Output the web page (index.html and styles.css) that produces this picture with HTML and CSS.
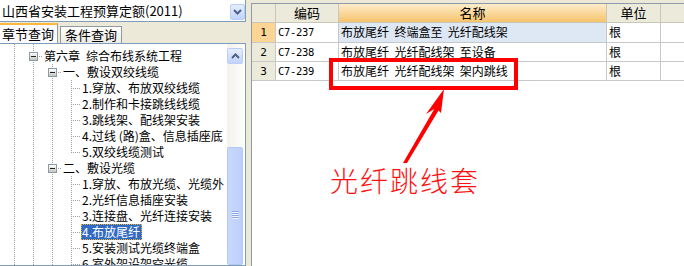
FILE: index.html
```html
<!DOCTYPE html>
<html>

<head>
    <meta charset="UTF-8">
    <title>定额查询</title>
    <link rel="stylesheet" href="styles.css">
</head>

<body>
    <div class="app">
        <!-- left: quota library + chapter tree -->
        <div class="left">
            <div class="combo">
                <span class="combo-text">山西省安装工程预算定额(2011)</span>
                <span class="combo-btn">
                    <svg width="9" height="6" viewBox="0 0 9 6"><path d="M1 1 L4.5 4.5 L8 1" fill="none" stroke="#4d6185" stroke-width="2"/></svg>
                </span>
            </div>
            <div class="tabs">
                <div class="tab active">章节查询</div>
                <div class="tab">条件查询</div>
            </div>
            <div class="tree-box">
                <div class="tree">
                    <div class="row filler"><span class="g v"></span><span class="g v"></span></div>
                    <div class="row"><span class="g v"></span><span class="g t"><span class="box"></span></span><span class="lbl">第六章&#8194;综合布线系统工程</span></div>
                    <div class="row"><span class="g v"></span><span class="g v"></span><span class="g t"><span class="box"></span></span><span class="lbl">一、敷设双绞线缆</span></div>
                    <div class="row"><span class="g v"></span><span class="g v"></span><span class="g v"></span><span class="g t"></span><span class="lbl">1.穿放、布放双绞线缆</span></div>
                    <div class="row"><span class="g v"></span><span class="g v"></span><span class="g v"></span><span class="g t"></span><span class="lbl">2.制作和卡接跳线线缆</span></div>
                    <div class="row"><span class="g v"></span><span class="g v"></span><span class="g v"></span><span class="g t"></span><span class="lbl">3.跳线架、配线架安装</span></div>
                    <div class="row"><span class="g v"></span><span class="g v"></span><span class="g v"></span><span class="g t"></span><span class="lbl">4.过线 (路)盒、信息插座底</span></div>
                    <div class="row"><span class="g v"></span><span class="g v"></span><span class="g v"></span><span class="g e"></span><span class="lbl">5.双绞线缆测试</span></div>
                    <div class="row"><span class="g v"></span><span class="g v"></span><span class="g t"><span class="box"></span></span><span class="lbl">二、敷设光缆</span></div>
                    <div class="row"><span class="g v"></span><span class="g v"></span><span class="g v"></span><span class="g t"></span><span class="lbl">1.穿放、布放光缆、光缆外</span></div>
                    <div class="row"><span class="g v"></span><span class="g v"></span><span class="g v"></span><span class="g t"></span><span class="lbl">2.光纤信息插座安装</span></div>
                    <div class="row"><span class="g v"></span><span class="g v"></span><span class="g v"></span><span class="g t"></span><span class="lbl">3.连接盘、光纤连接安装</span></div>
                    <div class="row"><span class="g v"></span><span class="g v"></span><span class="g v"></span><span class="g t"></span><span class="lbl selected">4.布放尾纤</span></div>
                    <div class="row"><span class="g v"></span><span class="g v"></span><span class="g v"></span><span class="g t"></span><span class="lbl">5.安装测试光缆终端盒</span></div>
                    <div class="row"><span class="g v"></span><span class="g v"></span><span class="g v"></span><span class="g t"></span><span class="lbl">6.室外架设架空光缆</span></div>
                </div>
                <div class="vscroll">
                    <div class="sb-btn">
                        <svg width="9" height="6" viewBox="0 0 9 6"><path d="M1 5 L4.5 1.5 L8 5" fill="none" stroke="#4d6185" stroke-width="2"/></svg>
                    </div>
                    <div class="sb-track"></div>
                    <div class="sb-thumb"><span class="grip"></span></div>
                </div>
            </div>
        </div>

        <!-- right: quota items grid -->
        <div class="right">
            <div class="grid-wrap">
                <div class="grid">
                    <div class="hd"></div>
                    <div class="hd">编码</div>
                    <div class="hd sorted">名称</div>
                    <div class="hd">单位</div>
                    <div class="hd last"></div>

                    <div class="num current">1</div>
                    <div class="cell code">C7-237</div>
                    <div class="cell focus">布放尾纤  终端盒至  光纤配线架</div>
                    <div class="cell">根</div>
                    <div class="cell last"></div>

                    <div class="num">2</div>
                    <div class="cell code">C7-238</div>
                    <div class="cell">布放尾纤  光纤配线架  至设备</div>
                    <div class="cell">根</div>
                    <div class="cell last"></div>

                    <div class="num">3</div>
                    <div class="cell code">C7-239</div>
                    <div class="cell">布放尾纤  光纤配线架  架内跳线</div>
                    <div class="cell">根</div>
                    <div class="cell last"></div>
                </div>
            </div>

            <!-- red annotation drawn over the grid -->
            <div class="mark-box"></div>
            <svg class="mark-arrow" width="70" height="85" viewBox="140 85 70 85">
                <polygon points="152,163 156,163 189,108 185,106" fill="#ff0000"/>
                <polygon points="193,89 175,114 185,108 190,113" fill="#ff0000"/>
            </svg>
            <div class="mark-text">光纤跳线套</div>
        </div>
    </div>
</body>

</html>
```

FILE: styles.css
```css
body {
    margin: 0;
    width: 684px;
    height: 266px;
    overflow: hidden;
    background-color: #ece9d8;
    font-family: "Noto Sans CJK SC", "Noto Sans", sans-serif;
    font-size: 12px;
    color: #000000;
}

.app {
    display: flex;
    height: 266px;
}

/* ---- left side ---- */
.left {
    width: 248px;
    display: flex;
    flex-direction: column;
}

.combo {
    width: 246px;
    height: 22px;
    box-sizing: border-box;
    border-right: 1px solid #7f9db9;
    border-bottom: 1px solid #7f9db9;
    background-color: #FFFFFF;
    display: flex;
    padding-left: 2px;
}

.combo-text {
    flex: 1;
    font-size: 13px;
    line-height: 21px;
    white-space: nowrap;
}

.combo-btn,
.sb-btn {
    width: 15px;
    height: 16px;
    box-sizing: border-box;
    border: 1px solid #bccdf9;
    border-radius: 2px;
    background: linear-gradient(#e6eefc, #c1d3fb);
    display: flex;
    align-items: center;
    justify-content: center;
}

.combo-btn {
    margin-top: 4px;
}

.tabs {
    height: 21px;
    display: flex;
    align-items: flex-end;
}

.tab {
    height: 17px;
    box-sizing: border-box;
    padding: 0 4px;
    border: 1px solid #919b9c;
    border-bottom: none;
    background: linear-gradient(#fefefe, #ecebe6);
    font-size: 13px;
    line-height: 15px;
    margin-left: 2px;
}

.tab.active {
    height: 20px;
    margin-left: 0;
    padding: 0 3px 0 2px;
    border-left: none;
    border-top: 2px solid #ffb73c;
    background: #fcfcfe;
    line-height: 18px;
}

.tree-box {
    flex: 1;
    width: 246px;
    box-sizing: border-box;
    border: 1px solid #7f9db9;
    border-left: none;
    background-color: #FFFFFF;
    display: flex;
    overflow: hidden;
}

.tree {
    flex: 1;
    min-width: 0;
    overflow: hidden;
    padding-left: 5px;
}

.row {
    display: flex;
    height: 16px;
}

.row.filler {
    height: 4px;
}

.g {
    width: 19px;
    height: 100%;
    flex: none;
    --dotv: repeating-linear-gradient(to bottom, #a0a0a0 0 1px, transparent 1px 2px);
    --doth: repeating-linear-gradient(to right, #a0a0a0 0 1px, transparent 1px 2px);
}

.g.v {
    background: var(--dotv) 9px 0 / 1px 100% no-repeat;
}

.g.t {
    background: var(--dotv) 9px 0 / 1px 100% no-repeat, var(--doth) 11px 8px / 8px 1px no-repeat;
}

.g.e {
    background: var(--dotv) 9px 0 / 1px 9px no-repeat, var(--doth) 11px 8px / 8px 1px no-repeat;
}

.box {
    display: block;
    width: 9px;
    height: 9px;
    box-sizing: border-box;
    margin: 4px 0 0 5px;
    border: 1px solid #8a9aa8;
    background: linear-gradient(#222, #222) center / 5px 1px no-repeat, linear-gradient(#ffffff, #c8c6bb);
}

.lbl {
    padding: 0 2px 0 1px;
    line-height: 16px;
    white-space: nowrap;
}

.lbl.selected {
    background-color: #316ac5;
    color: #FFFFFF;
    outline: 1px dotted #e0b040;
    outline-offset: -1px;
}

.vscroll {
    width: 16px;
    margin-right: 2px;
    padding-top: 4px;
    display: flex;
    flex-direction: column;
    background: linear-gradient(to right, #f3f2ec, #fdfdfa);
}

.sb-btn {
    width: 16px;
    height: 16px;
}

.sb-track {
    height: 83px;
}

.sb-thumb {
    flex: 1;
    border: 1px solid #b4c8f6;
    border-radius: 2px;
    background: linear-gradient(to right, #c9d8fc, #bcd0fb);
    display: flex;
    justify-content: center;
}

.grip {
    margin-top: 63px;
    width: 7px;
    height: 8px;
    background: repeating-linear-gradient(to bottom, #8faae8 0 1px, #eef3fe 1px 2px);
}

/* ---- right side ---- */
.right {
    flex: 1;
    margin-left: 3px;
    padding-top: 3px;
    position: relative;
    display: flex;
    flex-direction: column;
}

.grid-wrap {
    flex: 1;
    background-color: #FFFFFF;
    border-left: 1px solid #8d9aa8;
    border-top: 1px solid #8d9aa8;
}

.grid {
    display: grid;
    grid-template-columns: 24px 63px 268px 54px 1fr;
    grid-template-rows: 19px 20px 19px 19px;
}

.hd,
.num,
.cell {
    border-right: 1px solid #c8c8c8;
    border-bottom: 1px solid #c8c8c8;
    white-space: pre;
    overflow: hidden;
}

.hd {
    background-color: #ebeadb;
    border-right-color: #c9c7b8;
    border-bottom-color: #c9c7b8;
    text-align: center;
    font-size: 13px;
    line-height: 18px;
}

.hd.sorted {
    background: linear-gradient(#fdeccb, #f6c46c);
}

.num {
    background-color: #ebeadb;
    text-align: center;
    line-height: 19px;
    font-family: "DejaVu Sans Mono", monospace;
    font-size: 11px;
}

.num.current {
    background-color: #fcd594;
}

.cell {
    padding-left: 2px;
    line-height: 18px;
}

.cell.code {
    font-family: "DejaVu Sans Mono", monospace;
    font-size: 10.5px;
    letter-spacing: -0.3px;
}

.cell.focus {
    background-color: #dee7f4;
}

.last {
    border-right: none;
}

.mark-box {
    position: absolute;
    left: 78px;
    top: 58px;
    width: 189px;
    height: 32px;
    box-sizing: border-box;
    border: 4px solid #ff0000;
}

.mark-arrow {
    position: absolute;
    left: 140px;
    top: 85px;
}

.mark-text {
    position: absolute;
    left: 79px;
    top: 163px;
    font-size: 28px;
    font-weight: 300;
    line-height: 34px;
    letter-spacing: 2px;
    color: #ff1010;
    white-space: nowrap;
}
```
